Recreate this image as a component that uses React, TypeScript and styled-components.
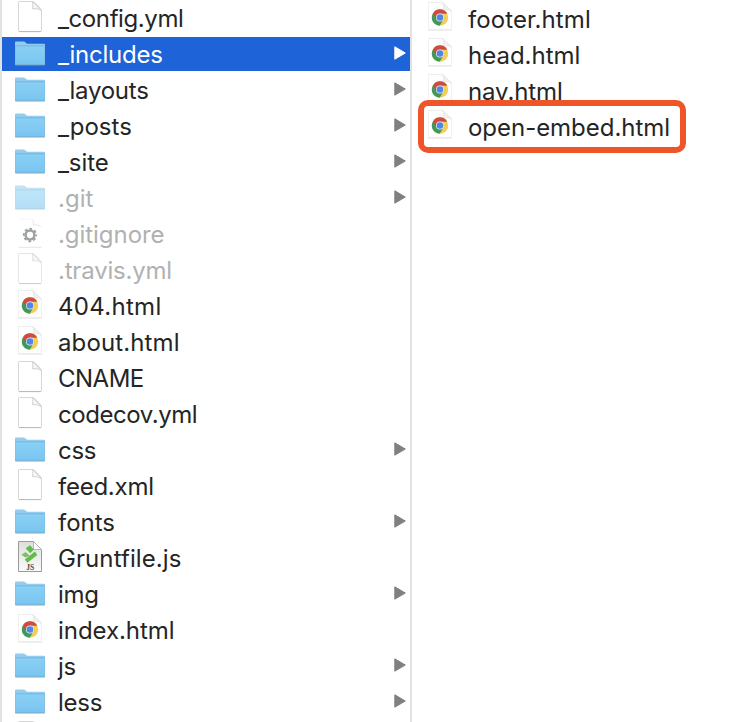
import React from "react";
import styled, { createGlobalStyle } from "styled-components";

const GlobalStyle = createGlobalStyle`
  html, body { margin: 0; padding: 0; background: #fff; overflow: hidden; }
`;

type Kind = "file" | "folder" | "chrome" | "gear" | "js";

interface Entry {
  name: string;
  kind: Kind;
  tracking?: number;
  hidden?: boolean;
  selected?: boolean;
}

const Finder = styled.main`
  display: flex;
  width: 742px;
  height: 722px;
  overflow: hidden;
  background: #fff;
  font-family: Inter, "Liberation Sans", sans-serif;
`;

const FileColumn = styled.ul<{ $width: number }>`
  box-sizing: border-box;
  display: flex;
  flex-direction: column;
  flex: none;
  gap: 2px;
  width: ${(p) => p.$width}px;
  margin: 0;
  padding: 1px 0 0;
  list-style: none;
`;

const Divider = styled.div`
  flex: none;
  width: 2px;
  background: #e1e1e1;
`;

const Row = styled.li<{ $selected?: boolean }>`
  box-sizing: border-box;
  display: flex;
  align-items: flex-start;
  flex: none;
  height: 34px;
  padding: 0 4px 0 13px;
  color: ${(p) => (p.$selected ? "#fff" : "#252525")};
  background: ${(p) => (p.$selected ? "#1f63d9" : "transparent")};
`;

const Icon = styled.svg<{ $dim?: boolean }>`
  display: block;
  flex: none;
  width: 30px;
  height: 34px;
  opacity: ${(p) => (p.$dim ? 0.55 : 1)};
`;

const Label = styled.span<{ $tracking: number; $dim?: boolean; $drop: number }>`
  flex: 1;
  margin-left: 13px;
  padding-top: ${(p) => p.$drop}px;
  font-size: 24px;
  line-height: 34px;
  letter-spacing: ${(p) => p.$tracking}px;
  white-space: nowrap;
  color: ${(p) => (p.$dim ? "#b1b1b1" : "inherit")};
`;

const Arrow = styled.svg`
  flex: none;
  width: 12px;
  height: 14px;
  margin-top: 9px;
`;

const HighlightAnchor = styled.div`
  position: relative;
`;

const Highlight = styled.div`
  position: absolute;
  box-sizing: border-box;
  left: 6px;
  top: 100px;
  width: 268px;
  height: 53px;
  border: 6px solid #ee5529;
  border-radius: 10px;
`;

const Definitions = styled.svg`
  position: absolute;
  width: 0;
  height: 0;
`;

function Paper({ faint }: { faint?: boolean }) {
  return (
    <>
      <path d="M4.3 .5H17.5Q18.6 .5 19.4 1.3L25.7 7.8Q26.5 8.6 26.5 9.6V29.5Q26.5 30.5 25.5 30.5H4.5Q3.5 30.5 3.5 29.5V1.3Q3.5 .5 4.3 .5Z" fill="#fff" stroke={faint ? "#e4e4e4" : "#d6d6d6"} />
      <path d="M17 .8C18.3 3 17.8 5.6 17.5 7.8C20.8 7.4 24 7.8 26.3 9.8L18.8 1.5Z" fill="#f7f7f7" stroke={faint ? "#d8d8d8" : "#c8c8c8"} strokeWidth=".8" />
      <path d="M4 30.6H26" stroke={faint ? "#cccccc" : "#b5b5b5"} strokeWidth=".9" />
    </>
  );
}

function Picture({ kind, hidden }: { kind: Kind; hidden?: boolean }) {
  switch (kind) {
    case "folder":
      return (
        <>
          <path d="M0 28V5.6Q0 4.6 1 4.6H8.8Q9.8 4.6 10.5 5.4L12 6.8H29Q30 6.8 30 7.8V28Z" fill="#93cdee" />
          <path d="M.4 8.8H29.6V27.4H.4Z" fill="url(#folderBlue)" stroke="#7abce3" strokeWidth=".7" />
          <path d="M.4 8.8H29.6" stroke="#71b9e1" strokeWidth=".7" />
          <path d="M.3 28H29.7" stroke="#6ca4c5" strokeWidth=".9" />
        </>
      );
    case "chrome":
      return (
        <>
          <path d="M3.5 1.5H18L26.5 9.5V28.8H3.5Z" fill="#fefefe" stroke="#f1f1f1" />
          <path d="M3.5 1.3H17" stroke="#e9e9e9" strokeWidth=".6" />
          <path d="M17.5 1.5C19 4 18.8 6 18.8 8.5C22 8 25 8.6 26.5 10.5Z" fill="#f1f1f1" stroke="#dfdfdf" strokeWidth=".7" />
          <path d="M3.3 29H26.7" stroke="#dedede" strokeWidth=".8" />
          <g transform="translate(15 16.5)">
            <circle r="8.2" fill="#f3cf56" />
            <path d="M-7.1 -4.1A8.2 8.2 0 0 0 -.3 8.2L3.5 2L0 0Z" fill="#40995a" />
            <path d="M-7.1 -4.1A8.2 8.2 0 0 1 7.3 -3.7H0L-3.8 1.3Z" fill="#cd4c40" />
            <circle r="4" fill="#e9edf5" />
            <circle r="3.3" fill="#5286e6" />
          </g>
        </>
      );
    case "gear":
      return (
        <>
          <path d="M4 2H16" fill="none" stroke="#f5f5f5" />
          <path d="M17 2C19 4 18.4 6 18.4 8C22 7.4 24 8 26 10" fill="none" stroke="#e9e9e9" />
          <path d="M3.5 30.3H26.5" stroke="#dddddd" strokeWidth=".8" />
          <g transform="translate(15 18)" fill="none" stroke="#9da2a5">
            <circle r="4.4" strokeWidth="2.5" />
            <circle r="6.2" strokeWidth="1.9" strokeDasharray="2.7 2.17" strokeDashoffset="1.35" />
          </g>
        </>
      );
    case "js":
      return (
        <>
          <path d="M3.5 .5H18.5L26.5 9V30.5H3.5Z" fill="url(#jsPaper)" stroke="#9b9b9b" />
          <path d="M18.5 .5V8.5H26.5Z" fill="#fff" stroke="#aaa" strokeWidth=".8" />
          <path d="M10.6 7.2L15 4.2L18.8 8.5L15.2 12.2Z" fill="#62bb4b" />
          <path d="M6.3 13.8L10.5 11L14.8 14.8L10.5 16.5Z" fill="#7bc266" />
          <path d="M9.8 18.4L20 10.4L22.3 14L12.4 21.7Z" fill="#62bb4b" />
          <text x="15.3" y="28.5" textAnchor="middle" fontFamily="Liberation Serif, serif" fontSize="7.5" fontWeight="700" fill="#4b4b4b">JS</text>
        </>
      );
    default:
      return <Paper faint={hidden} />;
  }
}

function FileRow({ entry, drop = 1 }: { entry: Entry; drop?: number }) {
  return (
    <Row $selected={entry.selected}>
      <Icon viewBox="0 0 30 34" $dim={entry.hidden && entry.kind === "folder"} aria-hidden="true">
        <Picture kind={entry.kind} hidden={entry.hidden} />
      </Icon>
      <Label $tracking={entry.tracking ?? 0} $dim={entry.hidden} $drop={drop}>{entry.name}</Label>
      {entry.kind === "folder" && (
        <Arrow viewBox="0 0 12 14" aria-hidden="true">
          <path d="M.8 .8L11.3 7L.8 13.2Z" fill={entry.selected ? "#fff" : "#808080"} stroke={entry.selected ? "#fff" : "#808080"} strokeWidth="1" strokeLinejoin="round" />
        </Arrow>
      )}
    </Row>
  );
}

const projectFiles: Entry[] = [
  { name: "_config.yml", kind: "file", tracking: -0.4 },
  { name: "_includes", kind: "folder", selected: true, tracking: -0.25 },
  { name: "_layouts", kind: "folder", tracking: -0.25 },
  { name: "_posts", kind: "folder" },
  { name: "_site", kind: "folder", tracking: -0.1 },
  { name: ".git", kind: "folder", hidden: true },
  { name: ".gitignore", kind: "gear", hidden: true, tracking: -0.05 },
  { name: ".travis.yml", kind: "file", hidden: true, tracking: -0.2 },
  { name: "404.html", kind: "chrome", tracking: 0.3 },
  { name: "about.html", kind: "chrome", tracking: 0.12 },
  { name: "CNAME", kind: "file", tracking: -0.5 },
  { name: "codecov.yml", kind: "file", tracking: -0.45 },
  { name: "css", kind: "folder", tracking: -0.3 },
  { name: "feed.xml", kind: "file", tracking: -0.25 },
  { name: "fonts", kind: "folder" },
  { name: "Gruntfile.js", kind: "js", tracking: 0.08 },
  { name: "img", kind: "folder", tracking: -0.3 },
  { name: "index.html", kind: "chrome", tracking: -0.05 },
  { name: "js", kind: "folder", tracking: -0.3 },
  { name: "less", kind: "folder", tracking: -0.25 },
  { name: "", kind: "file" },
];

const includeFiles: Entry[] = [
  { name: "footer.html", kind: "chrome", tracking: 0.08 },
  { name: "head.html", kind: "chrome" },
  { name: "nav.html", kind: "chrome", tracking: -0.1 },
  { name: "open-embed.html", kind: "chrome", tracking: -0.03 },
];

export default function App() {
  return (
    <>
      <GlobalStyle />
      <Definitions aria-hidden="true">
        <defs>
          <linearGradient id="folderBlue" x2="0" y2="1">
            <stop stopColor="#8bd0f5" />
            <stop offset="1" stopColor="#79c5f0" />
          </linearGradient>
          <linearGradient id="jsPaper" x2="0" y2="1">
            <stop stopColor="#dedede" />
            <stop offset="1" stopColor="#fafafa" />
          </linearGradient>
        </defs>
      </Definitions>
      <Finder>
        <Divider />
        <FileColumn $width={408}>
          {projectFiles.map((entry, i) => <FileRow key={i} entry={entry} />)}
        </FileColumn>
        <Divider />
        <HighlightAnchor>
          <FileColumn $width={330}>
            {includeFiles.map((entry) => <FileRow key={entry.name} entry={entry} drop={2} />)}
          </FileColumn>
          <Highlight />
        </HighlightAnchor>
      </Finder>
    </>
  );
}
